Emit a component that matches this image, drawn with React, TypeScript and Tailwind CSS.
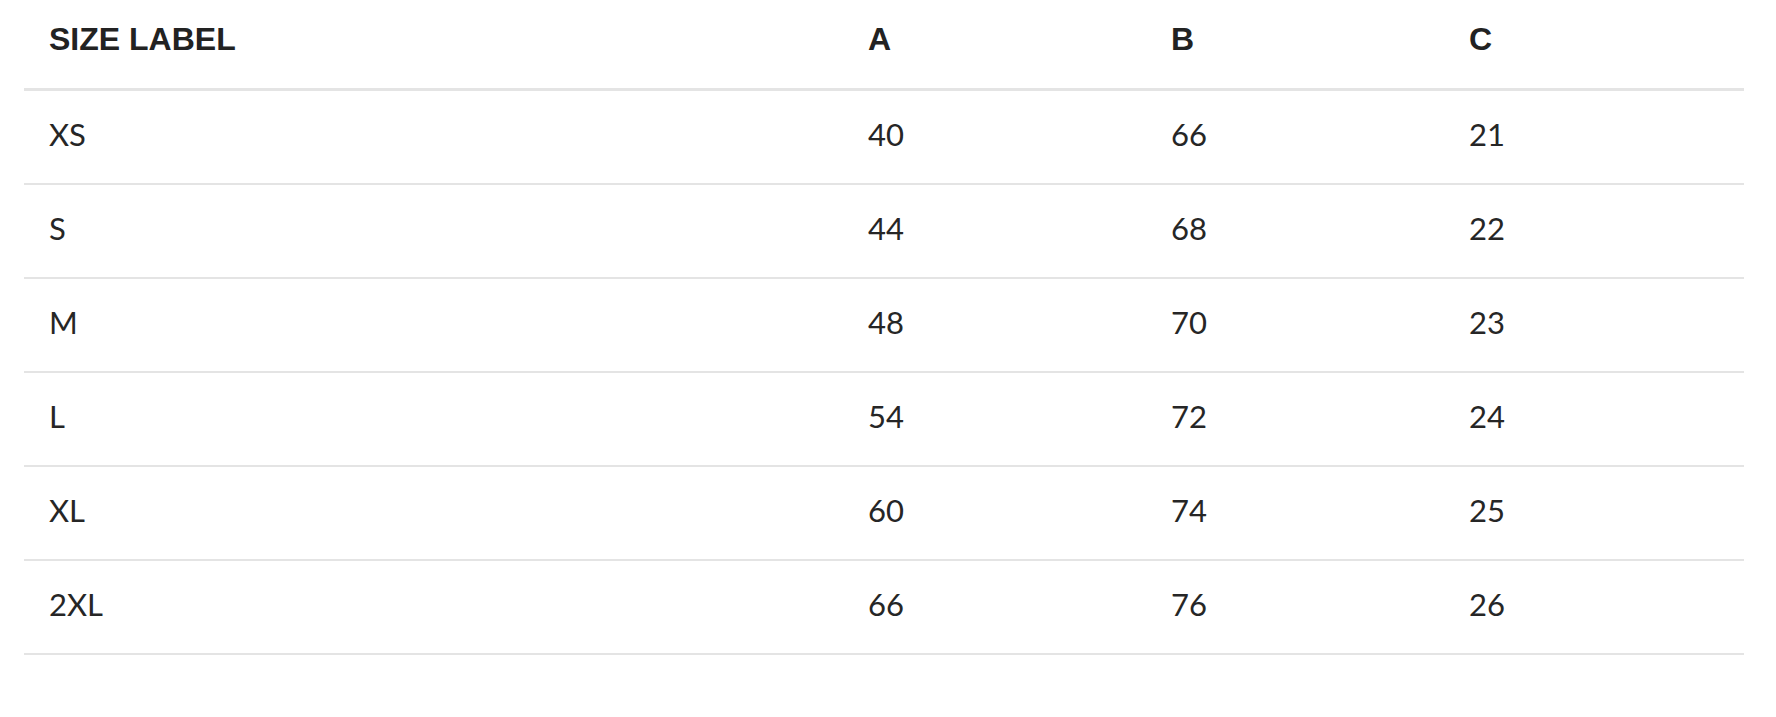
const rows = [
  { label: "XS", a: "40", b: "66", c: "21" },
  { label: "S", a: "44", b: "68", c: "22" },
  { label: "M", a: "48", b: "70", c: "23" },
  { label: "L", a: "54", b: "72", c: "24" },
  { label: "XL", a: "60", b: "74", c: "25" },
  { label: "2XL", a: "66", b: "76", c: "26" },
];

const cols = "grid grid-cols-[819px_303px_298px_300px]";

export default function App() {
  return (
    <div className="min-h-screen bg-white">
      <div className="ml-6 w-[1720px] text-[#222222]">
        <div
          className={`${cols} border-b-[3px] border-[#e4e4e4] font-['Liberation_Sans',Arial,sans-serif] text-[32px] font-bold leading-[32px]`}
        >
          <div className="px-[25px] pt-[23px] pb-[33px]">SIZE LABEL</div>
          <div className="px-[25px] pt-[23px] pb-[33px]">A</div>
          <div className="px-[25px] pt-[23px] pb-[33px]">B</div>
          <div className="px-[25px] pt-[23px] pb-[33px]">C</div>
        </div>

        {rows.map((row) => (
          <div
            key={row.label}
            className={`${cols} border-b-2 border-[#e4e4e4] font-['Lato','Open_Sans',sans-serif] text-[31px] leading-[31px] text-[#262626]`}
          >
            <div className="px-[25px] pt-[28px] pb-[33px]">{row.label}</div>
            <div className="px-[25px] pt-[28px] pb-[33px]">{row.a}</div>
            <div className="px-[25px] pt-[28px] pb-[33px]">{row.b}</div>
            <div className="px-[25px] pt-[28px] pb-[33px]">{row.c}</div>
          </div>
        ))}
      </div>
    </div>
  );
}
